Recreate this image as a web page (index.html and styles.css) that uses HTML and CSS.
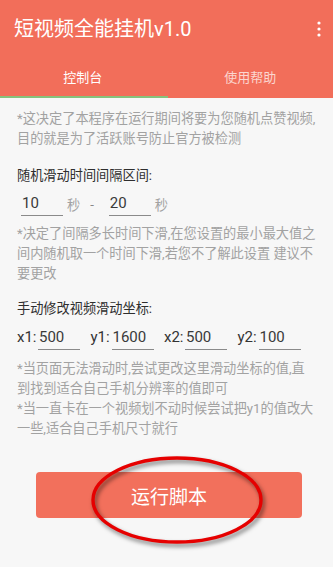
FILE: index.html
```html
<!DOCTYPE html>
<html lang="zh">
<head>
<meta charset="utf-8">
<link rel="stylesheet" href="styles.css">
</head>
<body>
<div class="screen">
  <header class="appbar">
    <div class="title">短视频全能挂机v1.0</div>
    <svg class="more" width="4" height="16" viewBox="0 0 4 16"><circle cx="2" cy="2" r="1.6" fill="#fff"/><circle cx="2" cy="8" r="1.6" fill="#fff"/><circle cx="2" cy="14" r="1.6" fill="#fff"/></svg>
  </header>
  <nav class="tabs">
    <div class="tab active">控制台</div>
    <div class="tab">使用帮助</div>
  </nav>
  <div class="indicator"><div class="indicator-bar"></div></div>
  <main class="content">
    <p class="note">*这决定了本程序在运行期间将要为您随机点赞视频,<br>目的就是为了活跃账号防止官方被检测</p>
    <h2 class="heading h-first">随机滑动时间间隔区间:</h2>
    <div class="interval-row">
      <div class="field f-min">10</div>
      <span class="unit">秒</span>
      <span class="dash">-</span>
      <div class="field f-max">20</div>
      <span class="unit">秒</span>
    </div>
    <p class="note note-2">*决定了间隔多长时间下滑,在您设置的最小最大值之<br>间内随机取一个时间下滑,若您不了解此设置 建议不<br>要更改</p>
    <h2 class="heading h-second">手动修改视频滑动坐标:</h2>
    <div class="coord-row">
      <div class="coord"><span class="label">x1:</span><div class="field">500</div></div>
      <div class="coord"><span class="label">y1:</span><div class="field">1600</div></div>
      <div class="coord"><span class="label">x2:</span><div class="field">500</div></div>
      <div class="coord"><span class="label">y2:</span><div class="field">100</div></div>
    </div>
    <p class="note note-3">*当页面无法滑动时,尝试更改这里滑动坐标的值,直<br>到找到适合自己手机分辨率的值即可<br>*当一直卡在一个视频划不动时候尝试把y1的值改大<br>一些,适合自己手机尺寸就行</p>
    <div class="btn-wrap">
      <button class="run">运行脚本</button>
      <svg class="circle" width="180" height="96" viewBox="0 0 180 96"><ellipse cx="90" cy="46" rx="84" ry="42" fill="none" stroke="#e60000" stroke-width="3.4"/></svg>
    </div>
  </main>
</div>
</body>
</html>
```

FILE: styles.css
```css
* { box-sizing: border-box; margin: 0; padding: 0; }
html, body { width: 333px; height: 567px; overflow: hidden; }
body {
  font-family: Roboto, "Noto Sans CJK SC", sans-serif;
  background: #f7f7f7;
}
.screen { width: 333px; height: 567px; display: flex; flex-direction: column; }
.appbar {
  height: 56px;
  background: #f26e5a;
  display: flex;
  align-items: center;
  justify-content: space-between;
  padding: 0 12px 0 14px;
}
.title { color: #fff; font-size: 20px; line-height: 24px; padding-top: 1px; }
.more { margin-top: 2px; }
.tabs {
  height: 40px;
  background: #f26e5a;
  display: flex;
}
.tab {
  flex: 1;
  display: flex;
  align-items: center;
  justify-content: center;
  font-size: 13px;
  color: rgba(255,255,255,0.72);
}
.tab.active { color: #fff; padding-right: 2px; }
.indicator { height: 2px; background: #f26e5a; display: flex; }
.indicator-bar { width: 168px; background: #86c27c; }
.content {
  flex: 1;
  padding: 11px 13px 0 17px;
  display: flex;
  flex-direction: column;
}
.note {
  font-size: 13.2px;
  line-height: 20px;
  color: #a2a2a2;
  white-space: nowrap;
}
.heading {
  font-size: 13.2px;
  line-height: 20px;
  font-weight: normal;
  color: #2e2e2e;
}
.h-first { margin-top: 17px; }
.h-second { margin-top: 15px; }
.interval-row {
  height: 24px;
  margin-top: 6px;
  display: flex;
  align-items: center;
}
.field {
  width: 42px;
  height: 24px;
  border-bottom: 1px solid #8a8a8a;
  font-size: 15px;
  line-height: 22px;
  color: #3a3a3a;
  padding-left: 1px;
}
.f-min { margin-left: 4px; }
.unit { font-size: 13.2px; color: #a2a2a2; margin-left: 4px; }
.dash { font-size: 13.2px; color: #888; margin-left: 10px; margin-right: 15px; }
.note-2 { margin-top: 8px; }
.coord-row {
  margin-top: 7px;
  height: 24px;
  display: flex;
  gap: 10.5px;
}
.coord { display: flex; align-items: flex-end; }
.label {
  width: 21px;
  font-size: 15px;
  line-height: 22px;
  color: #333;
  align-self: flex-start;
}
.note-3 { margin-top: 9px; }
.btn-wrap {
  position: relative;
  margin-top: 33px;
  margin-left: 19px;
  width: 266px;
}
.run {
  display: block;
  width: 266px;
  height: 46px;
  border: none;
  border-radius: 4px;
  background: #f2705c;
  color: #fff;
  font-family: Roboto, "Noto Sans CJK SC", sans-serif;
  font-size: 19px;
}
.circle {
  position: absolute;
  left: 51px;
  top: -18px;
  filter: drop-shadow(2px 3px 2px rgba(0,0,0,0.5));
}
```
